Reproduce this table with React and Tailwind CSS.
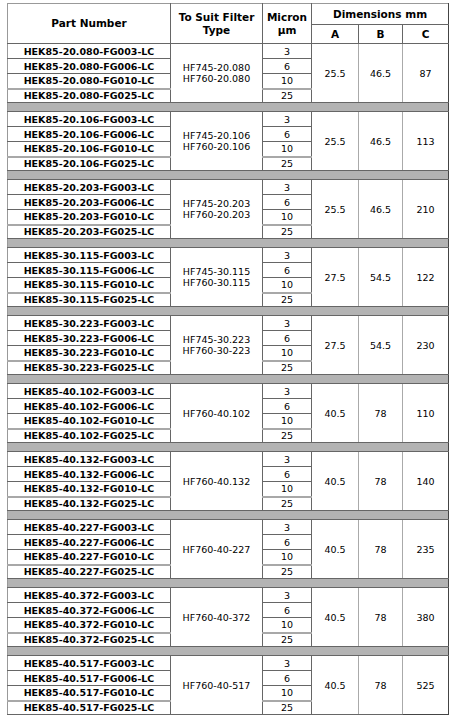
import React from "react";

const blocks = [
  { p: "20.080", suit: ["HF745-20.080", "HF760-20.080"], a: "25.5", b: "46.5", c: "87" },
  { p: "20.106", suit: ["HF745-20.106", "HF760-20.106"], a: "25.5", b: "46.5", c: "113" },
  { p: "20.203", suit: ["HF745-20.203", "HF760-20.203"], a: "25.5", b: "46.5", c: "210" },
  { p: "30.115", suit: ["HF745-30.115", "HF760-30.115"], a: "27.5", b: "54.5", c: "122" },
  { p: "30.223", suit: ["HF745-30.223", "HF760-30-223"], a: "27.5", b: "54.5", c: "230" },
  { p: "40.102", suit: ["HF760-40.102"], a: "40.5", b: "78", c: "110" },
  { p: "40.132", suit: ["HF760-40.132"], a: "40.5", b: "78", c: "140" },
  { p: "40.227", suit: ["HF760-40-227"], a: "40.5", b: "78", c: "235" },
  { p: "40.372", suit: ["HF760-40-372"], a: "40.5", b: "78", c: "380" },
  { p: "40.517", suit: ["HF760-40-517"], a: "40.5", b: "78", c: "525" },
];

const grades = [
  { fg: "FG003", micron: "3" },
  { fg: "FG006", micron: "6" },
  { fg: "FG010", micron: "10" },
  { fg: "FG025", micron: "25" },
];

const cell = "border border-[#666] p-0 text-center align-middle";

const App = () => {
  return (
    <div className="bg-white min-h-screen pt-[3px] pl-[7px]">
      <table
        className="border-collapse table-fixed w-[441px] text-black"
        style={{ fontFamily: '"DejaVu Sans", Verdana, sans-serif' }}
      >
        <colgroup>
          <col className="w-[163px]" />
          <col className="w-[92px]" />
          <col className="w-[49px]" />
          <col className="w-[47px]" />
          <col className="w-[44px]" />
          <col className="w-[46px]" />
        </colgroup>
        <thead className="text-[10.5px] font-bold leading-[13px]">
          <tr>
            <th rowSpan={2} className={`${cell} border-l-[#999] border-t-[#999]`}>
              Part Number
            </th>
            <th rowSpan={2} className={`${cell} border-t-[#999]`}>
              To Suit Filter
              <br />
              Type
            </th>
            <th rowSpan={2} className={`${cell} border-t-[#999]`}>
              Micron
              <br />
              µm
            </th>
            <th colSpan={3} className={`${cell} h-[21px] border-t-[#999] border-r-[#444]`}>
              Dimensions mm
            </th>
          </tr>
          <tr>
            <th className={`${cell} h-[19px]`}>A</th>
            <th className={`${cell}`}>B</th>
            <th className={`${cell} border-r-[#444]`}>C</th>
          </tr>
        </thead>
        <tbody className="text-[9.5px] leading-[11px]">
          {blocks.map((blk, bi) => (
            <React.Fragment key={blk.p}>
              {bi > 0 && (
                <tr>
                  <td
                    colSpan={6}
                    className="h-[9px] p-0 bg-[#b3b3b3] border border-[#666] border-l-[#999] border-r-[#444]"
                  ></td>
                </tr>
              )}
              {grades.map((g, gi) => {
                const third = gi === 2 ? "border-b-2 border-b-[#a8a8a8]" : "";
                const h = gi === 3 ? "h-[14px]" : "h-[15px]";
                return (
                  <tr key={g.fg}>
                    <td className={`${cell} ${h} font-bold border-l-[#999] ${third}`}>
                      HEK85-{blk.p}-{g.fg}-LC
                    </td>
                    {gi === 0 && (
                      <td rowSpan={4} className={`${cell}`}>
                        {blk.suit.map((s) => (
                          <div key={s}>{s}</div>
                        ))}
                      </td>
                    )}
                    <td className={`${cell} ${third}`}>{g.micron}</td>
                    {gi === 0 && (
                      <>
                        <td rowSpan={4} className={`${cell} border-r-[#aaa]`}>
                          {blk.a}
                        </td>
                        <td rowSpan={4} className={`${cell} border-r-[#aaa]`}>
                          {blk.b}
                        </td>
                        <td
                          rowSpan={4}
                          className={`${cell} border-r-[#444] ${bi === blocks.length - 1 ? "border-b-[#444]" : ""}`}
                        >
                          {blk.c}
                        </td>
                      </>
                    )}
                  </tr>
                );
              })}
            </React.Fragment>
          ))}
        </tbody>
      </table>
    </div>
  );
};

export default App;
